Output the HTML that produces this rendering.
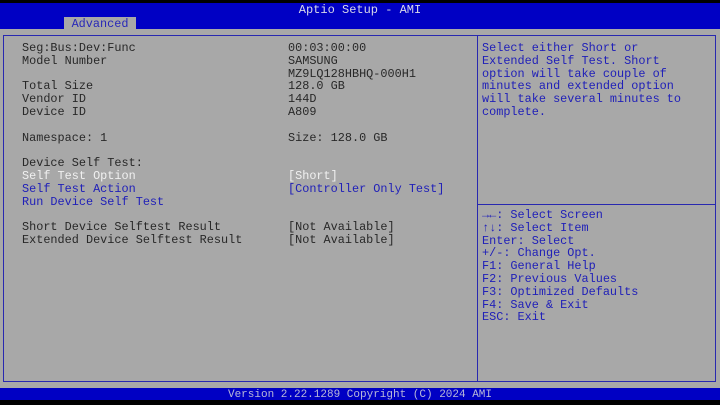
<!DOCTYPE html>
<html><head><style>
*{margin:0;padding:0}
body{width:720px;height:405px;background:#000;position:relative;overflow:hidden;font-family:"Liberation Mono",monospace;font-size:11.85px}
.hdr{position:absolute;left:0;top:3px;width:720px;height:26px;background:#0000c4}
.title{position:absolute;top:0px;width:720px;text-align:center;color:#d8d8e8;font-size:12px}
.tab{position:absolute;left:64px;top:14px;width:72px;height:15px;background:#a8a8a8;color:#2828b8;text-align:center;line-height:14px}
.body{position:absolute;left:0;top:29px;width:720px;height:359px;background:#a8a8a8}
.frame{position:absolute;left:3px;top:35px;width:711px;height:345px;border:1px solid #2828b0}
.div{position:absolute;left:477px;top:35px;width:1px;height:346px;background:#2828b0}
.hl{position:absolute;left:478px;top:204px;width:237px;height:1px;background:#2828b0}
.foot{position:absolute;left:0;top:388px;width:720px;height:12px;background:#0000c4;color:#b8b8d8;text-align:center;font-size:11px;line-height:13px}
.foot span{position:relative;top:1px}
.t{position:absolute;white-space:pre;line-height:12.8px;color:#282828}
.w{color:#f0f0f0}.b{color:#2020b8}
</style></head><body>
<div class="hdr"><div class="title">Aptio Setup - AMI</div><div class="tab">Advanced</div></div>
<div class="body"></div>
<div class="frame"></div><div class="div"></div><div class="hl"></div>
<div class="t" style="left:22px;top:42px">Seg:Bus:Dev:Func
Model Number

Total Size
Vendor ID
Device ID

Namespace: 1

Device Self Test:
<span class="w">Self Test Option</span>
<span class="b">Self Test Action</span>
<span class="b">Run Device Self Test</span>

Short Device Selftest Result
Extended Device Selftest Result</div>
<div class="t" style="left:288px;top:42px">00:03:00:00
SAMSUNG
MZ9LQ128HBHQ-000H1
128.0 GB
144D
A809

Size: 128.0 GB


<span class="w">[Short]</span>
<span class="b">[Controller Only Test]</span>


[Not Available]
[Not Available]</div>
<div class="t b" style="left:482px;top:42px">Select either Short or
Extended Self Test. Short
option will take couple of
minutes and extended option
will take several minutes to
complete.</div>
<div class="t b" style="left:482px;top:209px">→←: Select Screen
↑↓: Select Item
Enter: Select
+/-: Change Opt.
F1: General Help
F2: Previous Values
F3: Optimized Defaults
F4: Save &amp; Exit
ESC: Exit</div>
<div class="foot"><span>Version 2.22.1289 Copyright (C) 2024 AMI</span></div>
</body></html>
